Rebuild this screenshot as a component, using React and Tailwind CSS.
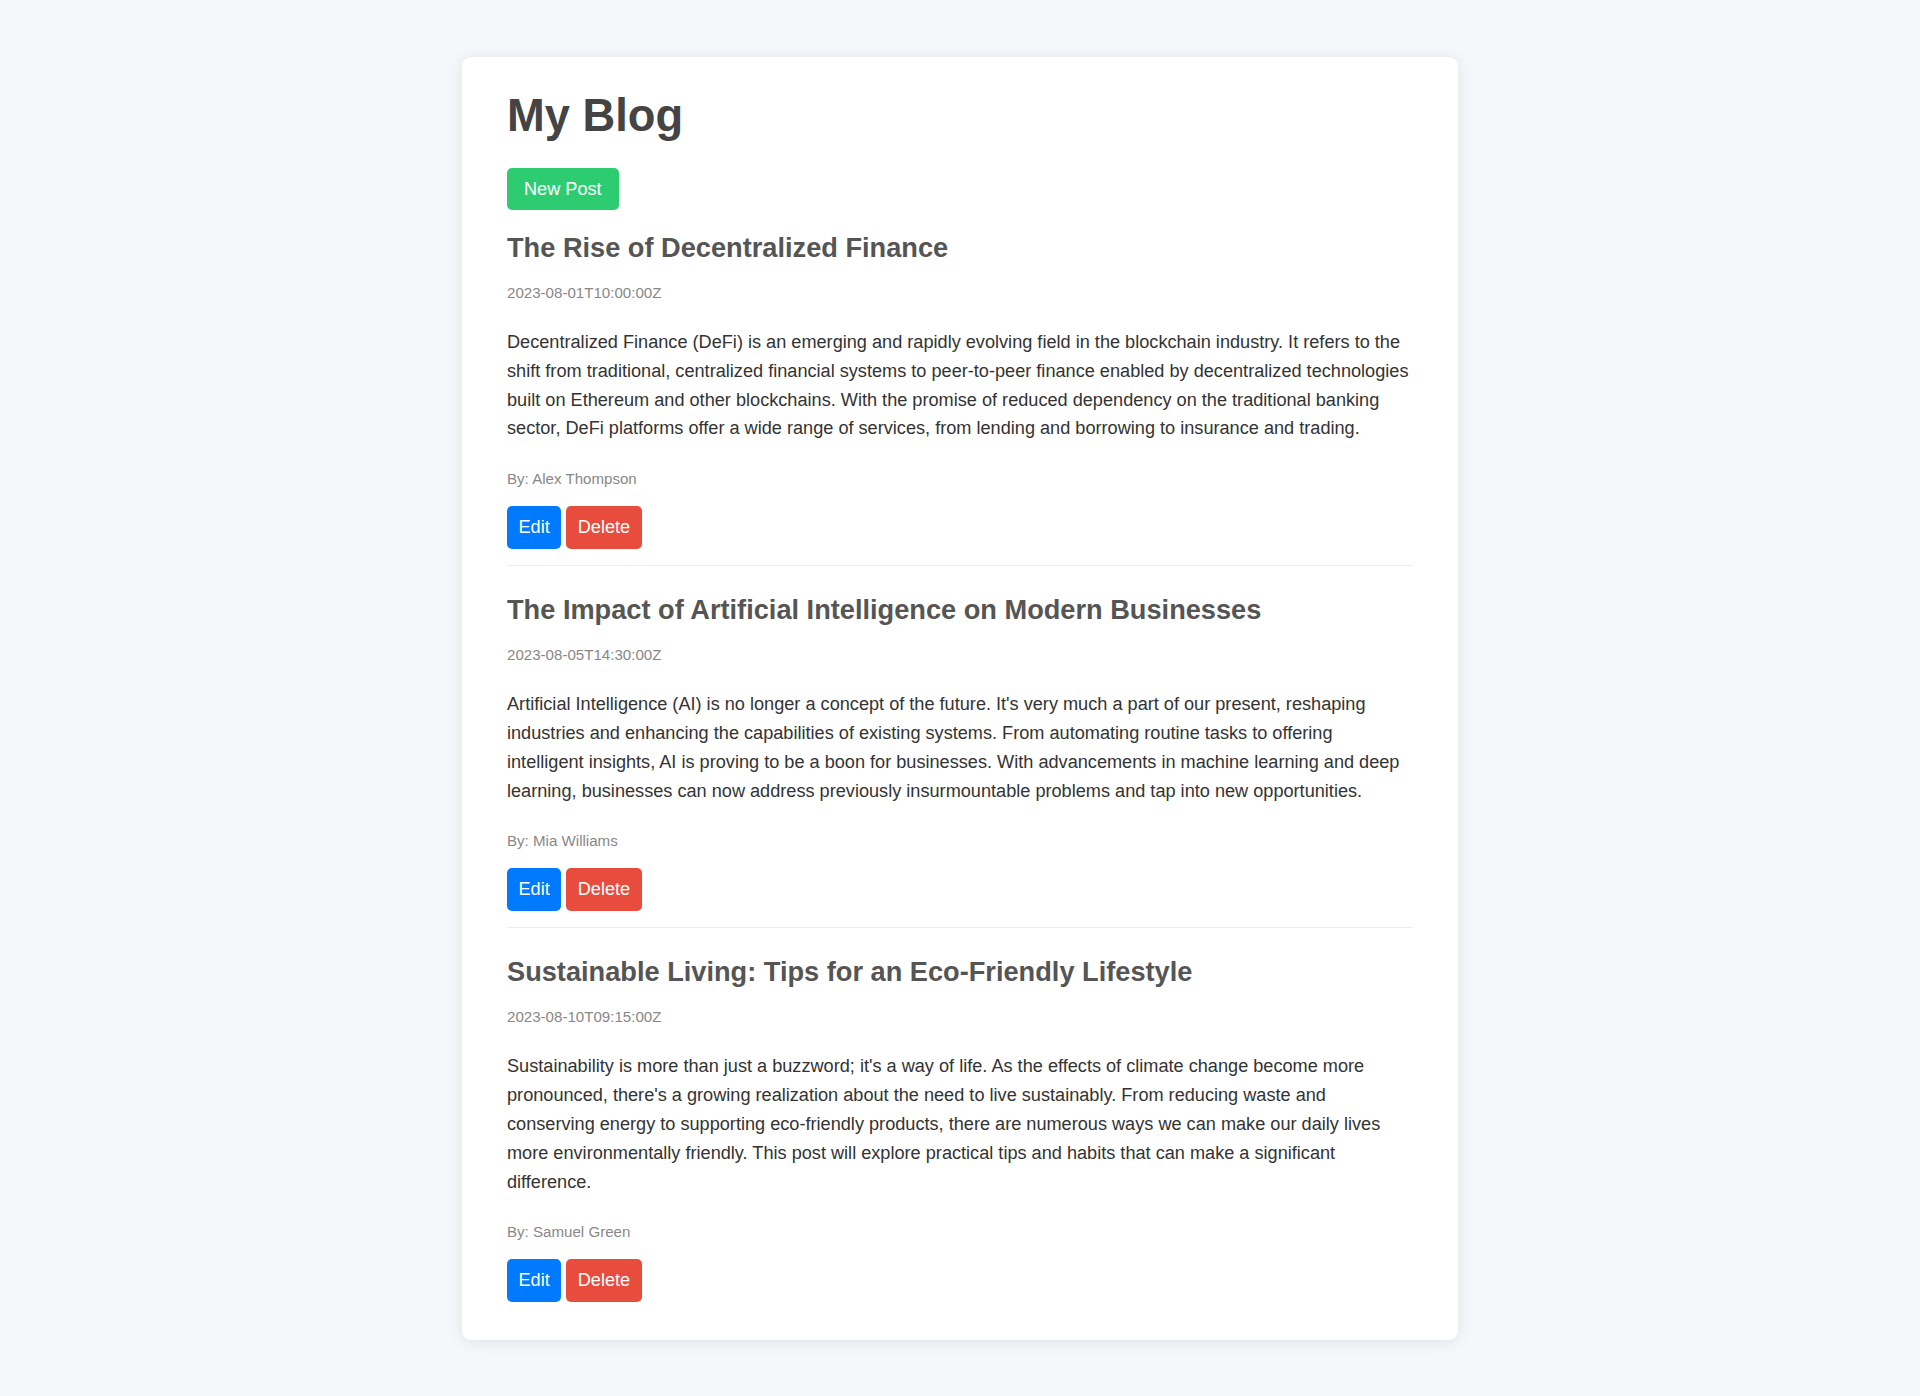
import React from "react";

const posts = [
  {
    title: "The Rise of Decentralized Finance",
    date: "2023-08-01T10:00:00Z",
    content:
      "Decentralized Finance (DeFi) is an emerging and rapidly evolving field in the blockchain industry. It refers to the shift from traditional, centralized financial systems to peer-to-peer finance enabled by decentralized technologies built on Ethereum and other blockchains. With the promise of reduced dependency on the traditional banking sector, DeFi platforms offer a wide range of services, from lending and borrowing to insurance and trading.",
    author: "Alex Thompson",
  },
  {
    title: "The Impact of Artificial Intelligence on Modern Businesses",
    date: "2023-08-05T14:30:00Z",
    content:
      "Artificial Intelligence (AI) is no longer a concept of the future. It's very much a part of our present, reshaping industries and enhancing the capabilities of existing systems. From automating routine tasks to offering intelligent insights, AI is proving to be a boon for businesses. With advancements in machine learning and deep learning, businesses can now address previously insurmountable problems and tap into new opportunities.",
    author: "Mia Williams",
  },
  {
    title: "Sustainable Living: Tips for an Eco-Friendly Lifestyle",
    date: "2023-08-10T09:15:00Z",
    content:
      "Sustainability is more than just a buzzword; it's a way of life. As the effects of climate change become more pronounced, there's a growing realization about the need to live sustainably. From reducing waste and conserving energy to supporting eco-friendly products, there are numerous ways we can make our daily lives more environmentally friendly. This post will explore practical tips and habits that can make a significant difference.",
    author: "Samuel Green",
  },
];

function Post({ post, last }) {
  return (
    <div className={last ? "" : "border-b border-[#eeeeee] pb-[16px] mb-[28px]"}>
      <h2 className="text-[27.2px] leading-[31px] font-bold text-[#555555]">{post.title}</h2>
      <p className="mt-[21px] text-[15.1px] leading-[17px] text-[#888888]">{post.date}</p>
      <p className="mt-[27px] text-[18.15px] leading-[28.8px] text-[#333333]">{post.content}</p>
      <p className="mt-[27px] text-[15.1px] leading-[17px] text-[#888888]">By: {post.author}</p>
      <div className="mt-[19px] flex gap-[5px]">
        <button className="h-[43px] px-[11.5px] rounded-[5px] bg-[#007bff] text-white text-[18.15px] leading-[21px]">
          Edit
        </button>
        <button className="h-[43px] px-[11.5px] rounded-[5px] bg-[#e74c3c] text-white text-[18.15px] leading-[21px]">
          Delete
        </button>
      </div>
    </div>
  );
}

export default function App() {
  return (
    <div
      className="min-h-[1396px] bg-[#f6f7fb] pt-[57px] pb-[56px]"
      style={{ fontFamily: '"Liberation Sans", Arial, sans-serif' }}
    >
      <div className="mx-auto w-[996px] bg-white rounded-[9px] shadow-[0_2px_16px_rgba(0,0,0,0.09)] px-[45px] pt-[33px] pb-[38px]">
        <h1 className="text-[45.3px] leading-[52px] font-bold text-[#444444]">My Blog</h1>
        <button className="mt-[26px] h-[42px] px-[17px] rounded-[5px] bg-[#2ecc71] text-white text-[18.15px] leading-[21px]">
          New Post
        </button>
        <div className="mt-[22px]">
          {posts.map((p, i) => (
            <Post key={i} post={p} last={i === posts.length - 1} />
          ))}
        </div>
      </div>
    </div>
  );
}
